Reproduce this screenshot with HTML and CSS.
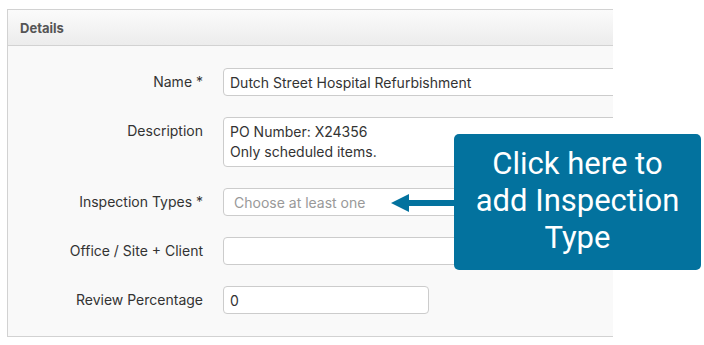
FILE: index.html
```html
<!DOCTYPE html>
<html>
    <head>
        <meta charset="utf-8">
        <title>Details</title>
        <link rel="stylesheet" href="styles.css">
    </head>
    <body>
        <div class="panel">
            <div class="panelHeader">Details</div>
            <div class="panelBody">
                <div class="row">
                    <label class="fieldLabel" for="name">Name *</label>
                    <input class="field" id="name" type="text" value="Dutch Street Hospital Refurbishment">
                </div>
                <div class="row">
                    <label class="fieldLabel" for="description">Description</label>
                    <textarea class="field area" id="description">PO Number: X24356
Only scheduled items.</textarea>
                </div>
                <div class="row">
                    <label class="fieldLabel" for="types">Inspection Types *</label>
                    <input class="field chooser" id="types" type="text" placeholder="Choose at least one">
                </div>
                <div class="row">
                    <label class="fieldLabel" for="office">Office / Site + Client</label>
                    <input class="field" id="office" type="text">
                </div>
                <div class="row">
                    <label class="fieldLabel" for="review">Review Percentage</label>
                    <input class="field short" id="review" type="text" value="0">
                </div>
            </div>
        </div>

        <!-- help callout over the form -->
        <svg class="arrow" width="64" height="20" viewBox="0 0 64 20">
            <polygon points="0,9 18,0 18,6 64,6 64,12 18,12 18,18" fill="#03729e"/>
        </svg>
        <div class="callout">Click here to<br>add Inspection<br>Type</div>
    </body>
</html>
```

FILE: styles.css
```css
body {
    margin: 0;
    font-family: Inter, 'Noto Sans', sans-serif;
    background-color: white;
    color: #333;
}

.panel {
    margin-top: 9px;
    margin-left: 7px;
    width: 605px;
    border: 1px solid #d2d2d2;
    border-right: none;
    overflow: hidden;
    background-color: #f9f9f9;
}

.panelHeader {
    height: 35px;
    line-height: 36px;
    padding-left: 12px;
    font-size: 13px;
    font-weight: bold;
    color: #555;
    background: linear-gradient(#fbfbfb, #ececec);
    border-bottom: 1px solid #d2d2d2;
}

.panelBody {
    display: flex;
    flex-direction: column;
    gap: 21px;
    padding: 22px 0 22px 0;
}

.row {
    display: flex;
    align-items: flex-start;
    gap: 20px;
}

.fieldLabel {
    width: 195px;
    flex-shrink: 0;
    text-align: right;
    font-size: 14px;
    line-height: 28px;
    color: #333;
}

.field {
    box-sizing: border-box;
    width: 430px;
    flex-shrink: 0;
    height: 28px;
    margin: 0;
    padding: 0 6px;
    border: 1px solid #cccccc;
    border-radius: 4px;
    background-color: white;
    font-family: Inter, 'Noto Sans', sans-serif;
    font-size: 14px;
    color: #333;
    outline: none;
}

.field::placeholder {
    color: #999;
}

.chooser {
    padding-left: 10px;
}

.area {
    height: 50px;
    padding: 4px 6px;
    line-height: 20px;
    resize: none;
    overflow: hidden;
}

.short {
    width: 206px;
}

.arrow {
    position: absolute;
    left: 391px;
    top: 194px;
}

.callout {
    position: absolute;
    left: 454px;
    top: 134px;
    width: 247px;
    height: 136px;
    box-sizing: border-box;
    padding-top: 11px;
    border-radius: 5px;
    background-color: #03729e;
    color: white;
    font-family: Roboto, 'Liberation Sans', sans-serif;
    font-size: 31px;
    line-height: 37px;
    text-align: center;
}
```
